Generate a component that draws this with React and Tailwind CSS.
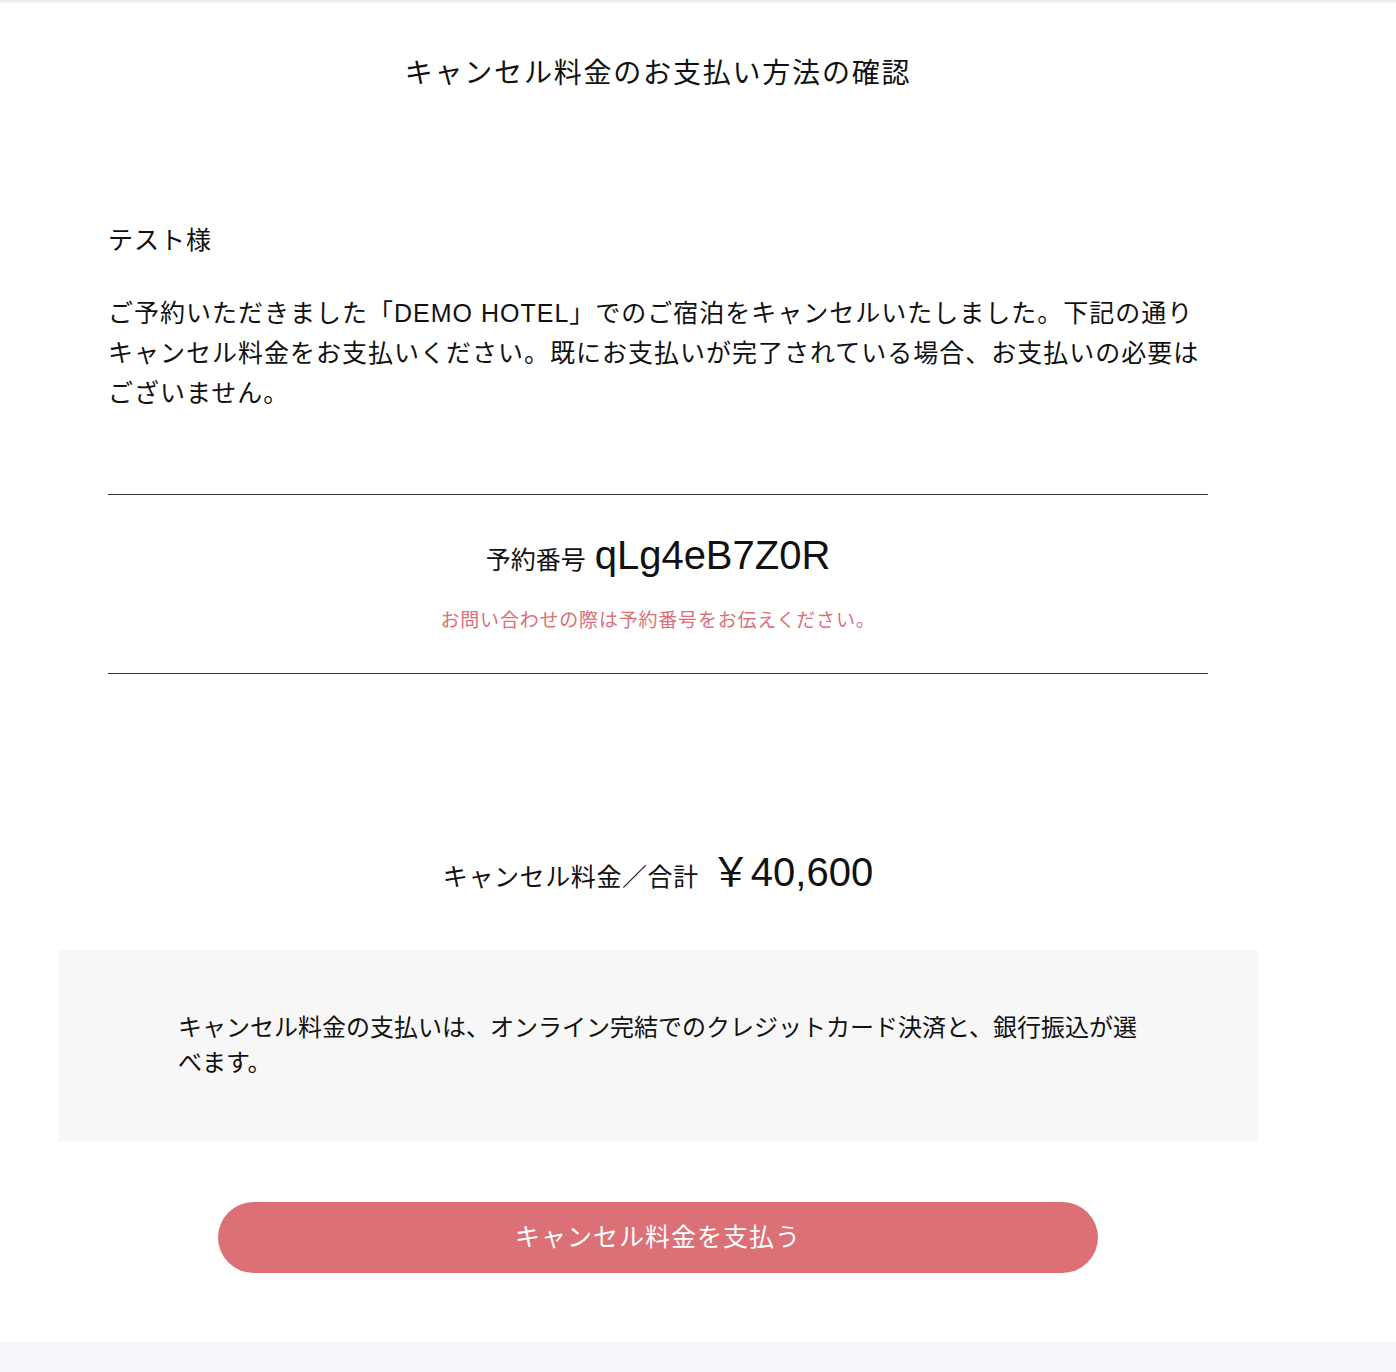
import React from "react";

const font = { fontFamily: '"Liberation Sans", "Noto Sans CJK JP", sans-serif' };

export default function App() {
  return (
    <div className="min-h-[1372px] bg-white text-[#111] flex flex-col" style={font}>
      <div className="h-[4px] bg-gradient-to-b from-[#e6e6e6] to-white" />
      <div className="w-[1316px] flex-1">
        <div className="w-[1200px] mx-auto flex flex-col">
          <h1 className="pt-[50px] text-center text-[28px] leading-[40px] font-normal tracking-[1.8px]">
            キャンセル料金のお支払い方法の確認
          </h1>

          <div className="px-[50px]">
            <p className="mt-[126px] text-[25px] leading-[40px] tracking-[1px]">テスト様</p>
            <p className="mt-[33px] text-[25px] leading-[40px] tracking-[1px]">
              ご予約いただきました「DEMO HOTEL」でのご宿泊をキャンセルいたしました。下記の通りキャンセル料金をお支払いください。既にお支払いが完了されている場合、お支払いの必要はございません。
            </p>

            <div className="mt-[81px] border-t border-[#333]">
              <div className="pt-[36px] flex items-baseline justify-center gap-[9px]">
                <span className="text-[25px] leading-[48px]">予約番号</span>
                <span className="text-[40px] leading-[48px]">qLg4eB7Z0R</span>
              </div>
              <p className="mt-[23px] text-center text-[19px] leading-[28px] tracking-[0.8px] text-[#dc6f78]">
                お問い合わせの際は予約番号をお伝えください。
              </p>
              <div className="mt-[38px] border-t border-[#333]" />
            </div>
          </div>

          <div className="mt-[174px] flex items-baseline justify-center gap-[12px]">
            <span className="text-[25px] leading-[48px] tracking-[0.6px]">キャンセル料金／合計</span>
            <span className="text-[40px] leading-[48px]">￥40,600</span>
          </div>

          <div className="mt-[49px] bg-[#f7f7f7] pt-[60px] pb-[62px] px-[120px]">
            <p className="text-[24px] leading-[35px]">
              キャンセル料金の支払いは、オンライン完結でのクレジットカード決済と、銀行振込が選べます。
            </p>
          </div>

          <div className="mt-[60px] flex justify-center">
            <button className="w-[880px] h-[71px] rounded-full bg-[#db7077] text-white text-[25px] tracking-[1px]">
              キャンセル料金を支払う
            </button>
          </div>
          <div className="h-[69px]" />
        </div>
      </div>
      <div className="h-[30px] bg-[#f6f7fb]" />
    </div>
  );
}
